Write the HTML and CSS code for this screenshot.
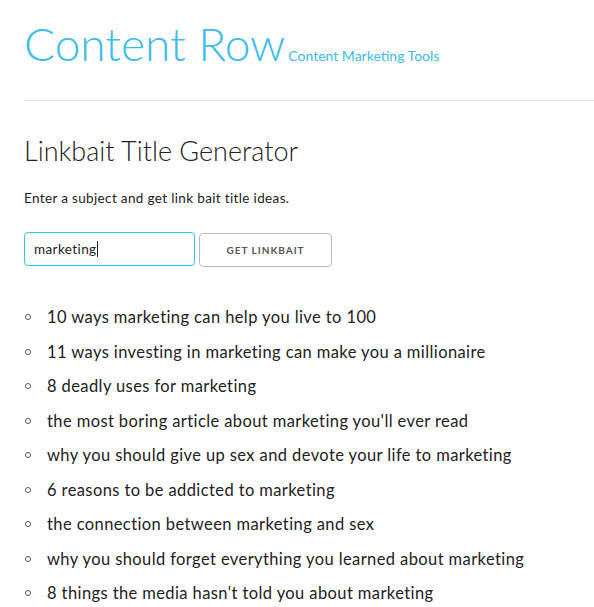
FILE: index.html
```html
<!DOCTYPE html>
<html>
<head>
<meta charset="utf-8">
<link rel="stylesheet" href="styles.css">
</head>
<body>
<div class="page">
  <header class="header">
    <span class="logo">Content Row</span>
    <span class="tagline">Content Marketing Tools</span>
  </header>
  <div class="rule"></div>
  <main class="main">
    <h1 class="title">Linkbait Title Generator</h1>
    <p class="desc">Enter a subject and get link bait title ideas.</p>
    <form class="form">
      <div class="input"><span>marketing</span><span class="caret"></span></div>
      <button type="button" class="btn">GET LINKBAIT</button>
    </form>
    <ul class="list">
      <li>10 ways marketing can help you live to 100</li>
      <li>11 ways investing in marketing can make you a millionaire</li>
      <li>8 deadly uses for marketing</li>
      <li>the most boring article about marketing you'll ever read</li>
      <li>why you should give up sex and devote your life to marketing</li>
      <li>6 reasons to be addicted to marketing</li>
      <li>the connection between marketing and sex</li>
      <li>why you should forget everything you learned about marketing</li>
      <li>8 things the media hasn't told you about marketing</li>
    </ul>
  </main>
</div>
</body>
</html>
```
FILE: styles.css
```css
html, body {
  margin: 0;
  padding: 0;
  background: #fff;
}
body {
  font-family: "Lato", "Open Sans", sans-serif;
  color: #222;
  overflow: hidden;
}
.page {
  padding-left: 24px;
}
.header {
  display: flex;
  align-items: baseline;
  gap: 3px;
  padding-top: 16px;
  height: 62px;
}
.logo {
  font-size: 46px;
  font-weight: 300;
  color: #3dbbea;
  line-height: 56px;
}
.tagline {
  font-size: 14px;
  color: #3dbbea;
}
.rule {
  margin-top: 22px;
  height: 1px;
  background: #e1e1e1;
}
.main {
  padding-top: 33px;
}
.title {
  margin: 0;
  font-size: 27px;
  font-weight: 300;
  line-height: 34px;
  color: #222;
}
.desc {
  margin: 20px 0 0;
  font-size: 13.5px;
  letter-spacing: 0.35px;
  line-height: 20px;
  color: #222;
}
.form {
  display: flex;
  gap: 4px;
  margin-top: 24px;
}
.input {
  box-sizing: border-box;
  width: 171px;
  height: 34px;
  border: 1px solid #33c3f0;
  border-radius: 4px;
  display: flex;
  align-items: center;
  padding-left: 9px;
  font-size: 13.5px;
  letter-spacing: 0.4px;
  color: #222;
}
.caret {
  display: inline-block;
  width: 1px;
  height: 16px;
  background: #222;
}
.btn {
  box-sizing: border-box;
  width: 133px;
  height: 34px;
  border: 1px solid #bbb;
  border-radius: 4px;
  background: #fff;
  font-family: inherit;
  font-size: 10px;
  font-weight: 700;
  letter-spacing: 1px;
  color: #555;
  margin-top: 1px;
}
.list {
  list-style: none;
  margin: 33px 0 0;
  padding: 0;
}
.list li {
  display: flex;
  align-items: center;
  font-size: 16.5px;
  letter-spacing: 0.4px;
  line-height: 34.5px;
  color: #222;
}
.list li::before {
  content: "";
  box-sizing: border-box;
  width: 6px;
  height: 6px;
  border: 1px solid #555;
  border-radius: 50%;
  margin-left: 1px;
  margin-right: 16px;
}
```
